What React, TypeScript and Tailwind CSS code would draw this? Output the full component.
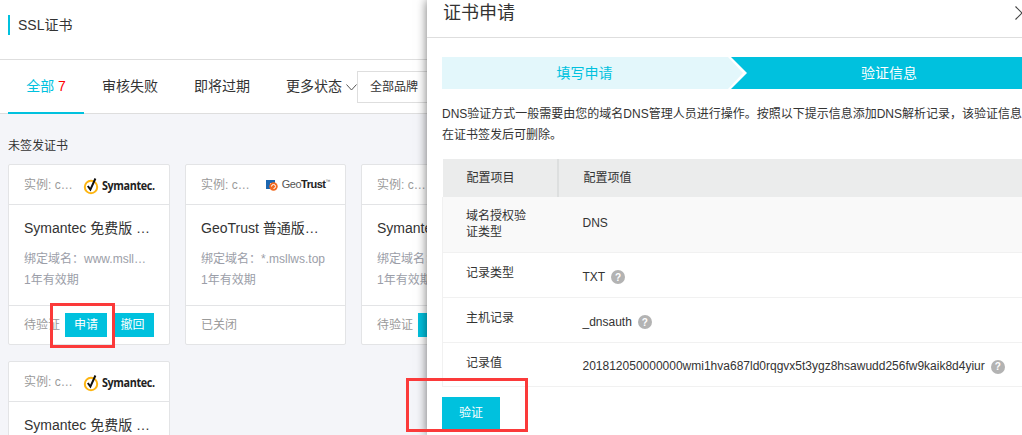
const font = "font-['Liberation_Sans','Noto_Sans_CJK_SC',sans-serif]";

function SymantecLogo() {
  return (
    <div className="flex items-center gap-[3px]">
      <svg width="16" height="20" viewBox="0 0 16 20">
        <circle cx="8" cy="12" r="6.2" fill="none" stroke="#fdb511" strokeWidth="2" />
        <path d="M4.8 11 L7.4 14.6 L12.4 3.5" fill="none" stroke="#111" strokeWidth="2" />
      </svg>
      <span className="text-[12px] font-bold tracking-[-0.4px] text-[#222] mt-[3px] font-['Open_Sans',sans-serif] scale-x-90 origin-left w-[52px] whitespace-nowrap">
        Symantec.
      </span>
    </div>
  );
}

function GeoTrustLogo() {
  return (
    <div className="flex items-center gap-[4px]">
      <svg width="12" height="12" viewBox="0 0 12 12">
        <path d="M0 1 H9 V4 H4 V10 H0 Z" fill="#1b66b0" />
        <circle cx="7.5" cy="7.5" r="4.2" fill="#f26a21" />
        <path d="M5.5 7.5 A2 2 0 1 1 7.5 9.5" fill="none" stroke="#fff" strokeWidth="1" />
      </svg>
      <span className="text-[11px] tracking-[-0.5px] text-[#555] whitespace-nowrap">
        Geo<b className="text-[#222]">Trust</b>
        <span className="text-[5px] align-super">™</span>
      </span>
    </div>
  );
}

type Cert = {
  logo: 'symantec' | 'geotrust';
  title: string;
  domain: string;
  status: string;
  actions?: boolean;
};

const certs: Cert[] = [
  { logo: 'symantec', title: 'Symantec 免费版 …', domain: '绑定域名：www.msll…', status: '待验证', actions: true },
  { logo: 'geotrust', title: 'GeoTrust 普通版…', domain: '绑定域名：*.msllws.top', status: '已关闭' },
  { logo: 'symantec', title: 'Symantec 免费版 …', domain: '绑定域名：www.msll…', status: '待验证', actions: true },
  { logo: 'symantec', title: 'Symantec 免费版 …', domain: '绑定域名：www.msll…', status: '待验证', actions: true },
];

function CertCard({ cert }: { cert: Cert }) {
  return (
    <div className="bg-white border border-[#e3e4e6] rounded-[2px] h-[181px]">
      <div className="h-[40px] border-b border-[#e3e4e6] pl-[15px] pr-[15px] flex items-center justify-between">
        <span className="text-[12px] text-[#9a9a9a] whitespace-nowrap">实例: c…</span>
        {cert.logo === 'symantec' ? <SymantecLogo /> : <GeoTrustLogo />}
      </div>
      <div className="h-[101px] border-b border-[#e3e4e6] pl-[15px] pt-[14px]">
        <div className="text-[14px] leading-[18px] text-[#333] whitespace-nowrap">{cert.title}</div>
        <div className="mt-[12px] text-[12px] leading-[20px] text-[#9b9ea8] whitespace-nowrap">{cert.domain}</div>
        <div className="mt-[1px] text-[12px] leading-[20px] text-[#9b9ea8]">1年有效期</div>
      </div>
      <div className="h-[38px] pl-[15px] flex items-center">
        <span className="text-[12px] text-[#9a9a9a] whitespace-nowrap">{cert.status}</span>
        {cert.actions && (
          <div className="flex items-center ml-[5px] gap-[8px]">
            <button className="w-[42px] h-[24px] bg-[#00c1de] text-white text-[12px]">申请</button>
            <button className="w-[39px] h-[24px] pr-[4px] bg-[#00c1de] text-white text-[12px]">撤回</button>
          </div>
        )}
      </div>
    </div>
  );
}

function Help() {
  return (
    <span className="inline-flex items-center justify-center w-[14px] h-[14px] rounded-full bg-[#b3b3b3] text-white text-[10px] font-bold ml-[6px] align-[0px]">
      ?
    </span>
  );
}

const rows = [
  { label: '域名授权验证类型', value: 'DNS', help: false, h: 'h-[55px]', bg: 'bg-[#f9f9f9]', labelPad: 'pb-[1px]', valuePad: 'pb-[3px]' },
  { label: '记录类型', value: 'TXT', help: true, h: 'h-[45px]', bg: 'bg-white', labelPad: 'pb-[3px]', valuePad: 'pt-[4px]' },
  { label: '主机记录', value: '_dnsauth', help: true, h: 'h-[45px]', bg: 'bg-white', labelPad: 'pb-[3px]', valuePad: 'pt-[4px]' },
  { label: '记录值', value: '201812050000000wmi1hva687ld0rqgvx5t3ygz8hsawudd256fw9kaik8d4yiur', help: true, h: 'h-[44px]', bg: 'bg-white', labelPad: 'pb-[3px]', valuePad: 'pt-[4px]' },
];

function Drawer() {
  return (
    <div className="absolute top-0 left-[427px] w-[635px] h-[435px] bg-white shadow-[0_0_10px_rgba(0,0,0,0.55)]">
      <div className="h-[38px] border-b border-[#dedede] pl-[16px] relative">
        <div className="text-[18px] leading-[26px] text-[#333]">证书申请</div>
        <svg className="absolute left-[588px] top-[6px]" width="14" height="14" viewBox="0 0 14 14">
          <path d="M0.5 0.5 L13.5 13.5 M13.5 0.5 L0.5 13.5" stroke="#444" strokeWidth="1.2" fill="none" />
        </svg>
      </div>
      <div className="px-[15px]">
        <div className="flex mt-[19px] h-[32px]">
          <div className="w-[301px] pr-[16px] bg-[#e3f7fb] text-[#00c1de] text-[14px] flex items-center justify-center [clip-path:polygon(0_0,286px_0,100%_50%,286px_100%,0_100%)]">
            填写申请
          </div>
          <div className="w-[316px] -ml-[12px] bg-[#00c1de] text-white text-[14px] flex items-center justify-center [clip-path:polygon(0_0,100%_0,100%_100%,0_100%,16px_50%)]">
            验证信息
          </div>
        </div>
        <p className="mt-[15px] text-[12px] leading-[21px] text-[#333] whitespace-nowrap">
          DNS验证方式一般需要由您的域名DNS管理人员进行操作。按照以下提示信息添加DNS解析记录，该验证信息
          <br />
          在证书签发后可删除。
        </p>
        <table className="mt-[13px] w-[605px] table-fixed border-collapse text-[12px] text-[#333]">
          <thead>
            <tr className="h-[38px] bg-[#ebecec]">
              <th className="w-[115px] pl-[24px] text-left font-normal border-r-2 border-[#dddfdf]">配置项目</th>
              <th className="pl-[25px] text-left font-normal">配置项值</th>
            </tr>
          </thead>
          <tbody>
            {rows.map((row) => (
              <tr key={row.label} className={`${row.h} ${row.bg} border-b border-x border-[#f1f1f1]`}>
                <td className={`pl-[23px] pr-[23px] leading-[16px] ${row.labelPad}`}>{row.label}</td>
                <td className={`pl-[25px] whitespace-nowrap ${row.valuePad}`}>
                  {row.value}
                  {row.help && <Help />}
                </td>
              </tr>
            ))}
          </tbody>
        </table>
        <button className="mt-[10px] w-[58px] h-[33px] bg-[#00c1de] text-white text-[12px]">验证</button>
      </div>
    </div>
  );
}

export default function App() {
  return (
    <div className={`relative w-[1022px] h-[435px] overflow-hidden bg-[#f4f5f9] ${font}`}>
      <div className="h-[60px] bg-white border-b border-[#dedede] px-[8px] pt-[15px]">
        <div className="h-[20px] border-l-2 border-[#00c1de] pl-[8px] text-[14px] leading-[20px] text-[#333]">SSL证书</div>
      </div>
      <div className="h-[54px] bg-white border-b border-[#dedede] pl-[8px] flex text-[14px] text-[#333] relative">
        <div className="w-[76px] h-[54px] border-b-2 border-[#00c1de] flex items-center justify-center text-[#00c1de]">
          全部&nbsp;<span className="text-[#f00]">7</span>
        </div>
        <div className="ml-[18px] flex items-center">审核失败</div>
        <div className="ml-[36px] flex items-center">即将过期</div>
        <div className="ml-[36px] flex items-center">
          更多状态
          <svg className="ml-[4px] mt-[2px]" width="11" height="7" viewBox="0 0 11 7">
            <path d="M0.5 0.5 L5.5 6 L10.5 0.5" fill="none" stroke="#555" strokeWidth="1" />
          </svg>
        </div>
        <div className="self-start mt-[11px] h-[32px] w-[120px] shrink-0 border border-[#dedede] pl-[12px] flex items-center text-[12px]">全部品牌</div>
      </div>
      <div className="px-[8px] pt-[23px]">
        <div className="text-[12px] leading-[18px] text-[#333]">未签发证书</div>
        <div className="mt-[9px] grid grid-cols-[162px_161px_162px] gap-x-[15px] gap-y-[16px]">
          {certs.map((cert, i) => (
            <CertCard key={i} cert={cert} />
          ))}
        </div>
      </div>

      <div className="absolute left-[50px] top-[303px] w-[65px] h-[45px] border-[3px] border-[#fb3a3a]" />
      <Drawer />
      <div className="absolute left-[406px] top-[378px] w-[122px] h-[54px] border-[3px] border-[#fb3a3a]" />
    </div>
  );
}
